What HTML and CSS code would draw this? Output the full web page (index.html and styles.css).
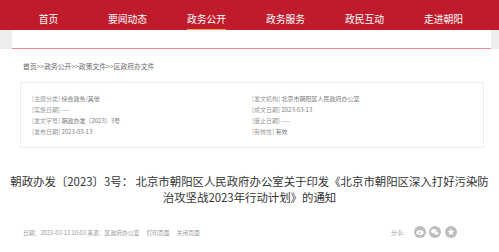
FILE: index.html
```html
<!DOCTYPE html>
<html>
<head>
    <meta charset="UTF-8">
    <title>北京市朝阳区人民政府</title>
    <link rel="stylesheet" href="styles.css">
</head>
<body>
<div id="nav">
    <a class="nav-item">首页</a>
    <a class="nav-item">要闻动态</a>
    <a class="nav-item active">政务公开</a>
    <a class="nav-item">政务服务</a>
    <a class="nav-item">政民互动</a>
    <a class="nav-item">走进朝阳</a>
</div>
<div id="band">
    <div id="band-inner"></div>
</div>

<div id="crumb">首页&gt;&gt;政务公开&gt;&gt;政策文件&gt;&gt;区政府办文件</div>

<div id="meta">
    <div class="col">
        <div class="row"><span class="label">[主题分类]</span> 综合政务/其他</div>
        <div class="row"><span class="label">[实施日期]</span> ----</div>
        <div class="row"><span class="label">[发文字号]</span> 朝政办发〔2023〕3号</div>
        <div class="row"><span class="label">[发布日期]</span> 2023-03-13</div>
    </div>
    <div class="col">
        <div class="row"><span class="label">[发文机构]</span> 北京市朝阳区人民政府办公室</div>
        <div class="row"><span class="label">[成文日期]</span> 2023-03-13</div>
        <div class="row"><span class="label">[废止日期]</span> ----</div>
        <div class="row"><span class="label">[有效性]</span> 有效</div>
    </div>
</div>

<h1 id="title">朝政办发〔2023〕3号： 北京市朝阳区人民政府办公室关于印发《北京市朝阳区深入打好污染防治攻坚战2023年行动计划》的通知</h1>

<div id="info">
    <div class="info-left">日期：2023-03-13 10:03 来源：区政府办公室<span class="link">打印页面</span><span class="link">关闭页面</span></div>
    <div class="share">
        <span class="share-text">分享:</span>
        <span class="share-icon">
            <svg width="12" height="12" viewBox="0 0 12 12"><circle cx="6" cy="6" r="6" fill="#bdbdbd"/><ellipse cx="6" cy="6.6" rx="3.6" ry="2.4" fill="#fff"/><circle cx="5.6" cy="6.8" r="1" fill="#bdbdbd"/></svg>
        </span>
        <span class="share-icon">
            <svg width="12" height="12" viewBox="0 0 12 12"><circle cx="6" cy="6" r="6" fill="#bdbdbd"/><ellipse cx="5" cy="5.2" rx="2.8" ry="2.2" fill="#fff"/><ellipse cx="7.4" cy="7.2" rx="2.3" ry="1.8" fill="#fff" stroke="#bdbdbd" stroke-width="0.5"/></svg>
        </span>
        <span class="share-icon">
            <svg width="12" height="12" viewBox="0 0 12 12"><circle cx="6" cy="6" r="6" fill="#bdbdbd"/><path d="M6 2.4 L7 4.8 L9.5 5 L7.6 6.6 L8.2 9.2 L6 7.8 L3.8 9.2 L4.4 6.6 L2.5 5 L5 4.8 Z" fill="#fff"/></svg>
        </span>
    </div>
</div>
</body>
</html>
```

FILE: styles.css
```css
body {
    margin: 0px;
    background-color: #ffffff;
    font-family: 'Noto Sans CJK SC', 'Noto Sans', sans-serif;
    color: #333333;
}
#nav {
    height: 30px;
    background-color: #c01b2d;
    display: flex;
    padding-left: 9px;
    box-sizing: border-box;
}
.nav-item {
    width: 79px;
    text-align: center;
    color: #ffffff;
    font-size: 9.8px;
    line-height: 12px;
    padding-top: 13px;
    box-sizing: border-box;
}
/* orange bar under the current section */
.active {
    position: relative;
}
.active::before {
    content: "";
    position: absolute;
    left: 20px;
    right: 20px;
    bottom: 0px;
    height: 1px;
    background-color: #f2a04a;
}
#band {
    background-color: #eeeeee;
    padding: 0px 8px 0px 12px;
}
#band-inner {
    height: 18px;
    background-color: #ffffff;
    border-bottom: 1.5px solid #f08a8f;
}
#crumb {
    padding: 12px 0px 0px 23px;
    font-size: 6.8px;
    line-height: 10px;
    color: #666666;
}
#meta {
    margin: 11px 15px 0px 20px;
    border: 1px solid #eeeeee;
    padding: 10px 11px 10px 11px;
    display: flex;
}
.col {
    width: 220px;
}
.row {
    font-size: 6px;
    line-height: 11px;
    color: #7a7a7a;
}
.label {
    color: #999999;
}
#title {
    margin: 25px 0px 0px 0px;
    padding: 0px 8px;
    font-size: 11.4px;
    font-weight: normal;
    line-height: 16px;
    text-align: center;
    color: #333333;
}
#info {
    display: flex;
    align-items: center;
    height: 14px;
    margin: 20px 0px 0px 23px;
    font-size: 5.8px;
    color: #999999;
}
.info-left {
    width: 368px;
    flex-shrink: 0;
}
.link {
    margin-left: 7px;
}
.share {
    display: flex;
    align-items: center;
    flex-shrink: 0;
}
.share-text {
    margin-right: 6px;
}
.share-icon {
    display: block;
    width: 12px;
    height: 12px;
    margin-left: 3.5px;
    flex-shrink: 0;
}
.share-icon svg {
    display: block;
}
```
